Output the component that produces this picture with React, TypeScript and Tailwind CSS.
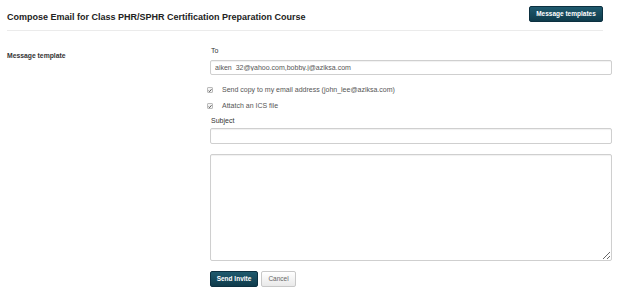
import React from 'react';

const App: React.FC = () => {
  return (
    <div className="w-[623px] h-[304px] bg-white pl-[7px] text-[#333] font-['Liberation_Sans',Arial,sans-serif] overflow-hidden">
      {/* Header */}
      <div className="flex items-start justify-between h-[31px] mr-[20px] border-b border-[#ebebeb]">
        <h1 className="mt-[11px] text-[9px] leading-[12px] font-bold text-[#222]">
          Compose Email for Class PHR/SPHR Certification Preparation Course
        </h1>
        <button className="mt-[6px] h-[16px] w-[74px] rounded-[2px] bg-gradient-to-b from-[#1f5a6e] to-[#0f3b4b] border border-[#0c3040] text-white text-[6.5px] font-bold leading-none">
          Message templates
        </button>
      </div>

      <div className="flex">
        {/* Left label column */}
        <div className="w-[203px] pt-[20px]">
          <div className="text-[6.8px] leading-[10px] font-bold text-[#333]">Message template</div>
        </div>

        {/* Right form column */}
        <div className="w-[402px] flex flex-col">
          <div className="mt-[15px] pl-[1px] text-[7px] leading-[10px] text-[#333]">To</div>
          <input
            readOnly
            value="aiken_32@yahoo.com,bobby.j@aziksa.com"
            className="mt-[4px] h-[15px] w-full rounded-[2px] border border-[#cfcfcf] px-[4px] py-0 text-[7px] leading-[12px] text-[#555] outline-none shadow-[inset_0_1px_1px_rgba(0,0,0,0.06)]"
          />

          <label className="mt-[10px] h-[10px] flex items-center text-[7px] text-[#555]">
            <span className="ml-[-3px] w-[6px] h-[6px] flex items-center justify-center border border-[#bbb] rounded-[1px] bg-[#f4f4f4]">
              <svg viewBox="0 0 8 8" className="w-[5px] h-[5px]">
                <path d="M1 4.2 L3 6.2 L7 1.5" fill="none" stroke="#333" strokeWidth="1.6" />
              </svg>
            </span>
            <span className="ml-[9px]">Send copy to my email address (john_lee@aziksa.com)</span>
          </label>

          <label className="mt-[6px] h-[10px] flex items-center text-[7px] text-[#555]">
            <span className="ml-[-3px] w-[6px] h-[6px] flex items-center justify-center border border-[#bbb] rounded-[1px] bg-[#f4f4f4]">
              <svg viewBox="0 0 8 8" className="w-[5px] h-[5px]">
                <path d="M1 4.2 L3 6.2 L7 1.5" fill="none" stroke="#333" strokeWidth="1.6" />
              </svg>
            </span>
            <span className="ml-[9px]">Attatch an ICS file</span>
          </label>

          <div className="mt-[5px] pl-[1px] text-[7px] leading-[10px] text-[#333]">Subject</div>
          <input
            readOnly
            className="mt-[2px] h-[16px] w-full rounded-[2px] border border-[#cfcfcf] px-[4px] py-0 text-[7px] leading-[12px] outline-none shadow-[inset_0_1px_1px_rgba(0,0,0,0.06)]"
          />

          <textarea
            readOnly
            className="mt-[10px] h-[107px] w-full rounded-[2px] border border-[#cfcfcf] outline-none shadow-[inset_0_1px_1px_rgba(0,0,0,0.06)]"
          />

          <div className="mt-[10px] flex gap-[3px]">
            <button className="h-[16px] w-[48px] rounded-[2px] bg-gradient-to-b from-[#1f5a6e] to-[#0f3b4b] border border-[#0c3040] text-white text-[6.5px] font-bold leading-none">
              Send Invite
            </button>
            <button className="h-[16px] w-[35px] rounded-[2px] bg-gradient-to-b from-white to-[#e9e9e9] border border-[#c8c8c8] text-[#666] text-[6.5px] leading-none">
              Cancel
            </button>
          </div>
        </div>
      </div>
    </div>
  );
};

export default App;
